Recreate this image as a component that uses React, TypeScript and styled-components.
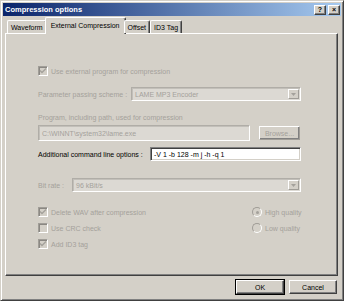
import React from 'react';
import styled, { createGlobalStyle } from 'styled-components';

const Global = createGlobalStyle`
  html, body { margin: 0; padding: 0; background: #d4d0c8; }
  body { font-family: "Liberation Sans", Arial, sans-serif; font-size: 7px; color: #000; }
  * { box-sizing: border-box; }
`;

const Window = styled.div`
  width: 344px;
  height: 301px;
  background: #d4d0c8;
  border-top: 1px solid #d4d0c8;
  border-left: 1px solid #d4d0c8;
  border-right: 1px solid #404040;
  border-bottom: 1px solid #404040;
  box-shadow: inset 1px 1px 0 #fff, inset -1px -1px 0 #808080;
  padding: 2px;
  display: flex;
  flex-direction: column;
`;

const TitleBar = styled.div`
  height: 13px;
  background: linear-gradient(to right, #0a246a, #a6caf0);
  display: flex;
  align-items: center;
  padding: 0 1px 0 2px;
  color: #fff;
  font-weight: bold;
  font-size: 7.5px;
`;

const TitleText = styled.div`
  flex: 1;
  white-space: nowrap;
`;

const CaptionButtons = styled.div`
  display: flex;
  gap: 2px;
`;

const CaptionButton = styled.div`
  width: 12px;
  height: 10px;
  background: #d4d0c8;
  border-top: 1px solid #fff;
  border-left: 1px solid #fff;
  border-right: 1px solid #404040;
  border-bottom: 1px solid #404040;
  box-shadow: inset -1px -1px 0 #808080;
  display: flex;
  align-items: center;
  justify-content: center;
  color: #000;
  font-weight: bold;
  font-size: 7px;
  line-height: 1;
`;

const Body = styled.div`
  display: flex;
  flex-direction: column;
  padding: 1px 3px 0 2px;
`;

const TabStrip = styled.div`
  display: flex;
  align-items: flex-end;
  height: 16px;
  padding-left: 2px;
  position: relative;
  z-index: 1;
`;

const Tab = styled.div<{ $active?: boolean }>`
  height: ${p => (p.$active ? 17 : 13)}px;
  margin: ${p => (p.$active ? '0 -2px -1px -2px' : '0')};
  padding: ${p => (p.$active ? '0 5px 2px' : '0 3px')};
  background: #d4d0c8;
  border-top: 1px solid #fff;
  border-left: 1px solid #fff;
  border-right: 1px solid #404040;
  box-shadow: inset -1px 0 0 #808080;
  border-radius: 2px 2px 0 0;
  display: flex;
  align-items: center;
  white-space: nowrap;
  font-size: 7px;
`;

const Panel = styled.div`
  height: 243px;
  margin-right: 0;
  background: #d4d0c8;
  border-top: 1px solid #fff;
  border-left: 1px solid #fff;
  border-right: 1px solid #404040;
  border-bottom: 1px solid #404040;
  box-shadow: inset -1px -1px 0 #808080;
  padding: 30px 36px 0 32px;
  display: flex;
  flex-direction: column;
`;

const Row = styled.div<{ $mt?: number; $h?: number }>`
  display: flex;
  align-items: center;
  margin-top: ${p => p.$mt ?? 0}px;
  height: ${p => p.$h ?? 14}px;
  gap: 8px;
`;

const Label = styled.span<{ $disabled?: boolean; $w?: number }>`
  color: ${p => (p.$disabled ? '#a4a19b' : '#000')};
  white-space: nowrap;
  ${p => (p.$w ? `width: ${p.$w}px; flex: none;` : '')}
`;

const CheckRow = styled.label`
  display: flex;
  align-items: center;
  gap: 3px;
  height: 14px;
`;

const CheckBox = styled.span`
  width: 10px;
  height: 10px;
  flex: none;
  border-top: 1px solid #a09d97;
  border-left: 1px solid #a09d97;
  border-right: 1px solid #fff;
  border-bottom: 1px solid #fff;
  box-shadow: inset 1px 1px 0 #8a8782;
  background: #d4d0c8;
  display: flex;
  align-items: center;
  justify-content: center;
`;

const Radio = styled.span`
  width: 10px;
  height: 10px;
  flex: none;
  border-radius: 50%;
  border: 1px solid;
  border-color: #a09d97 #fff #fff #a09d97;
  background: #d4d0c8;
  display: flex;
  align-items: center;
  justify-content: center;
`;

const Dot = styled.span`
  width: 3px;
  height: 3px;
  border-radius: 50%;
  background: #a4a19b;
`;

const Field = styled.div<{ $enabled?: boolean }>`
  flex: 1;
  height: 100%;
  background: ${p => (p.$enabled ? '#fff' : '#dcd9d3')};
  border-top: 1px solid ${p => (p.$enabled ? '#808080' : '#b0ada7')};
  border-left: 1px solid ${p => (p.$enabled ? '#808080' : '#b0ada7')};
  border-right: 1px solid #fff;
  border-bottom: 1px solid #fff;
  box-shadow: ${p => (p.$enabled ? 'inset 1px 1px 0 #404040, inset -1px -1px 0 #d4d0c8' : 'inset 1px 1px 0 #c2bfb9')};
  display: flex;
  align-items: center;
  padding-left: 3px;
  color: ${p => (p.$enabled ? '#000' : '#a4a19b')};
  white-space: nowrap;
  overflow: hidden;
`;

const Combo = styled(Field)`
  padding-right: 1px;
`;

const ComboText = styled.span`
  flex: 1;
`;

const ComboArrow = styled.span`
  width: 11px;
  height: 10px;
  flex: none;
  background: #d4d0c8;
  border-top: 1px solid #fff;
  border-left: 1px solid #fff;
  border-right: 1px solid #a09d97;
  border-bottom: 1px solid #a09d97;
  display: flex;
  align-items: center;
  justify-content: center;
`;

const SmallButton = styled.div<{ $w: number; $default?: boolean; $disabled?: boolean }>`
  width: ${p => p.$w}px;
  height: 16px;
  flex: none;
  background: #d4d0c8;
  border: 1px solid ${p => (p.$default ? '#000' : 'transparent')};
  display: flex;
  position: relative;
  color: ${p => (p.$disabled ? '#a4a19b' : '#000')};
`;

const ButtonFace = styled.div<{ $disabled?: boolean }>`
  flex: 1;
  border-top: 1px solid #fff;
  border-left: 1px solid #fff;
  border-right: 1px solid ${p => (p.$disabled ? '#a09d97' : '#404040')};
  border-bottom: 1px solid ${p => (p.$disabled ? '#a09d97' : '#404040')};
  box-shadow: inset -1px -1px 0 #808080;
  display: flex;
  align-items: center;
  justify-content: center;
  white-space: nowrap;
`;

const OptionsGrid = styled.div`
  display: grid;
  grid-template-columns: 214px 1fr;
  grid-auto-rows: 14px;
  row-gap: 2px;
  margin-top: 13px;
`;

const Footer = styled.div`
  display: flex;
  justify-content: flex-end;
  gap: 3px;
  margin-top: 3px;
`;

const Check = () => (
  <svg width="8" height="8" viewBox="0 0 8 8">
    <path d="M1 3.5 L3 5.5 L7 1.5" stroke="#a4a19b" strokeWidth="1.4" fill="none" />
  </svg>
);

const Arrow = () => (
  <svg width="5" height="3" viewBox="0 0 5 3">
    <path d="M0 0 H5 L2.5 3 Z" fill="#a4a19b" />
  </svg>
);

function Button({ w, label, isDefault, disabled }: { w: number; label: string; isDefault?: boolean; disabled?: boolean }) {
  return (
    <SmallButton $w={w} $default={isDefault} $disabled={disabled}>
      <ButtonFace $disabled={disabled}>{label}</ButtonFace>
    </SmallButton>
  );
}

export default function App() {
  return (
    <>
      <Global />
      <Window>
        <TitleBar>
          <TitleText>Compression options</TitleText>
          <CaptionButtons>
            <CaptionButton>?</CaptionButton>
            <CaptionButton>×</CaptionButton>
          </CaptionButtons>
        </TitleBar>
        <Body>
          <TabStrip>
            <Tab>Waveform</Tab>
            <Tab $active>External Compression</Tab>
            <Tab>Offset</Tab>
            <Tab>ID3 Tag</Tab>
          </TabStrip>
          <Panel>
            <CheckRow>
              <CheckBox><Check /></CheckBox>
              <Label $disabled>Use external program for compression</Label>
            </CheckRow>
            <Row $mt={9}>
              <Label $disabled $w={85}>Parameter passing scheme :</Label>
              <Combo>
                <ComboText>LAME MP3 Encoder</ComboText>
                <ComboArrow><Arrow /></ComboArrow>
              </Combo>
            </Row>
            <Row $mt={11} $h={10}>
              <Label $disabled>Program, including path, used for compression</Label>
            </Row>
            <Row $mt={3} $h={16}>
              <Field>C:\WINNT\system32\lame.exe</Field>
              <Button w={43} label="Browse..." disabled />
            </Row>
            <Row $mt={6}>
              <Label $w={104}>Additional command line options :</Label>
              <Field $enabled>-V 1 -b 128 -m j -h -q 1</Field>
            </Row>
            <Row $mt={17}>
              <Label $disabled $w={26}>Bit rate :</Label>
              <Combo>
                <ComboText>96 kBit/s</ComboText>
                <ComboArrow><Arrow /></ComboArrow>
              </Combo>
            </Row>
            <OptionsGrid>
              <CheckRow>
                <CheckBox><Check /></CheckBox>
                <Label $disabled>Delete WAV after compression</Label>
              </CheckRow>
              <CheckRow>
                <Radio><Dot /></Radio>
                <Label $disabled>High quality</Label>
              </CheckRow>
              <CheckRow>
                <CheckBox />
                <Label $disabled>Use CRC check</Label>
              </CheckRow>
              <CheckRow>
                <Radio />
                <Label $disabled>Low quality</Label>
              </CheckRow>
              <CheckRow>
                <CheckBox><Check /></CheckBox>
                <Label $disabled>Add ID3 tag</Label>
              </CheckRow>
            </OptionsGrid>
          </Panel>
          <Footer>
            <Button w={50} label="OK" isDefault />
            <Button w={50} label="Cancel" />
          </Footer>
        </Body>
      </Window>
    </>
  );
}
